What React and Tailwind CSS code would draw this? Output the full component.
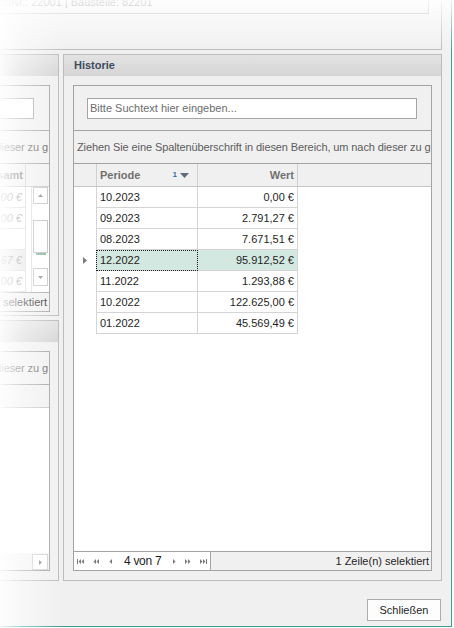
import React from 'react';

const rows = [
  { periode: '10.2023', wert: '0,00 €' },
  { periode: '09.2023', wert: '2.791,27 €' },
  { periode: '08.2023', wert: '7.671,51 €' },
  { periode: '12.2022', wert: '95.912,52 €', selected: true },
  { periode: '11.2022', wert: '1.293,88 €' },
  { periode: '10.2022', wert: '122.625,00 €' },
  { periode: '01.2022', wert: '45.569,49 €' },
];

const leftRows = [
  { wert: '0,00 €' },
  { wert: '0,00 €' },
  { wert: '' },
  { wert: '1.204,67 €', selected: true },
  { wert: '0,00 €' },
];

const GROUP_TEXT = 'Ziehen Sie eine Spaltenüberschrift in diesen Bereich, um nach dieser zu g';

// kleine Navigator-Pfeile
function NavIcon({ type }) {
  const c = '#7a7a7a';
  if (type === 'first')
    return (
      <svg width="7" height="5" viewBox="0 0 7 5">
        <rect x="0" y="0" width="1" height="5" fill={c} />
        <path d="M4 0L1.5 2.5L4 5Z M7 0L4.5 2.5L7 5Z" fill={c} />
      </svg>
    );
  if (type === 'prevPage')
    return (
      <svg width="6" height="5" viewBox="0 0 6 5">
        <path d="M3 0L0.5 2.5L3 5Z M6 0L3.5 2.5L6 5Z" fill={c} />
      </svg>
    );
  if (type === 'prev')
    return (
      <svg width="3" height="5" viewBox="0 0 3 5">
        <path d="M3 0L0.5 2.5L3 5Z" fill={c} />
      </svg>
    );
  if (type === 'next')
    return (
      <svg width="3" height="5" viewBox="0 0 3 5">
        <path d="M0 0L2.5 2.5L0 5Z" fill={c} />
      </svg>
    );
  if (type === 'nextPage')
    return (
      <svg width="6" height="5" viewBox="0 0 6 5">
        <path d="M0 0L2.5 2.5L0 5Z M3 0L5.5 2.5L3 5Z" fill={c} />
      </svg>
    );
  return (
    <svg width="7" height="5" viewBox="0 0 7 5">
      <path d="M0 0L2.5 2.5L0 5Z M3 0L5.5 2.5L3 5Z" fill={c} />
      <rect x="6" y="0" width="1" height="5" fill={c} />
    </svg>
  );
}

function PanelHeader({ title }) {
  return (
    <div className="flex h-[21px] shrink-0 items-center bg-linear-to-b from-[#e3e3e3] to-[#d5d5d5] pl-[10px] font-bold text-[#3d4b5c]">
      {title}
    </div>
  );
}

function LeftTop() {
  return (
    <div className="flex h-[262px] shrink-0 justify-end overflow-hidden">
      <div className="flex w-[300px] shrink-0 flex-col border border-[#bcbcbc]">
        <PanelHeader title="Positionen" />
        <div className="flex flex-1 flex-col pt-[9px] pr-[8px] pb-[7px] pl-[9px]">
          <div className="flex flex-1 flex-col border border-[#a3a3a3]">
            <div className="flex h-[45px] shrink-0 justify-end border-b border-[#a3a3a3] pt-[12px] pr-[15px]">
              <div className="h-[21px] w-[220px] border border-[#a5a5a5] bg-white" />
            </div>
            <div className="flex h-[33px] shrink-0 items-center justify-end overflow-hidden whitespace-nowrap border-b border-[#a3a3a3] pr-[1px] tracking-[-0.1px] text-[#5c5c5c]">
              <span>{GROUP_TEXT}</span>
            </div>
            <div className="flex h-[23px] shrink-0 border-b border-[#c5c5c5]">
              <div className="flex-1 border-r border-[#d0d0d0]" />
              <div className="flex w-[80px] items-center justify-end border-r border-[#d0d0d0] pr-[2px] font-bold text-[#707070]">
                Gesamt
              </div>
              <div className="w-[23px]" />
            </div>
            <div className="flex flex-1 overflow-hidden bg-white">
              <div className="flex flex-1 flex-col">
                {leftRows.map((r, i) => (
                  <div key={i} className={`flex h-[21px] shrink-0 ${r.selected ? 'bg-[#e6e6e6]' : ''}`}>
                    <div className="flex-1 border-r border-b border-[#d8d8d8]" />
                    <div className="flex w-[80px] items-center justify-end border-r border-b border-[#d8d8d8] pr-[3px] italic text-[#8a8a8a]">
                      {r.wert}
                    </div>
                  </div>
                ))}
              </div>
              <div className="flex w-[23px] pl-[5px]">
                <div className="flex w-[17px] flex-col border-l border-[#dadada] pl-[1px]">
                  <div className="flex h-[17px] w-[15px] items-center justify-center border border-[#c4c4c4] bg-white">
                    <svg width="5" height="3" viewBox="0 0 5 3"><path d="M0 3L2.5 0L5 3Z" fill="#8a8a8a" /></svg>
                  </div>
                  <div className="mt-[16px] h-[33px] w-[15px] border border-[#bdbdbd] bg-white" />
                  <div className="mx-auto h-[2px] w-[10px] bg-[#7fb594]" />
                  <div className="mt-[13px] flex h-[18px] w-[15px] items-center justify-center border border-[#c4c4c4] bg-white">
                    <svg width="5" height="3" viewBox="0 0 5 3"><path d="M0 0L2.5 3L5 0Z" fill="#8a8a8a" /></svg>
                  </div>
                </div>
              </div>
            </div>
            <div className="flex h-[19px] shrink-0 items-center justify-end border-t border-[#a3a3a3] pr-[2px]">
              1 Zeile(n) selektiert
            </div>
          </div>
        </div>
      </div>
    </div>
  );
}

function LeftBottom() {
  return (
    <div className="flex h-[261px] shrink-0 justify-end overflow-hidden">
      <div className="flex w-[300px] shrink-0 flex-col border border-[#bcbcbc]">
        <PanelHeader title="Details" />
        <div className="flex flex-1 flex-col pt-[9px] pr-[8px] pb-[9px] pl-[9px]">
          <div className="flex flex-1 flex-col border border-[#a3a3a3]">
            <div className="flex h-[33px] shrink-0 items-center justify-end overflow-hidden whitespace-nowrap border-b border-[#a3a3a3] pr-[1px] tracking-[-0.1px] text-[#5c5c5c]">
              <span>{GROUP_TEXT}</span>
            </div>
            <div className="h-[23px] shrink-0 border-b border-[#c5c5c5]" />
            <div className="flex-1 bg-white" />
            <div className="flex h-[17px] shrink-0 justify-end bg-[#f4f4f4] pr-[1px]">
              <div className="flex h-[16px] w-[16px] items-center justify-center self-end border border-[#d0d0d0] bg-white">
                <svg width="3" height="5" viewBox="0 0 3 5"><path d="M0 0L3 2.5L0 5Z" fill="#8a8a8a" /></svg>
              </div>
            </div>
          </div>
        </div>
      </div>
    </div>
  );
}

function Historie() {
  return (
    <div className="flex w-[379px] shrink-0 flex-col border border-[#bcbcbc]">
      <PanelHeader title="Historie" />
      <div className="flex flex-1 flex-col p-[9px]">
        <div className="flex flex-1 flex-col border border-[#a3a3a3]">
          {/* Suchfeld */}
          <div className="h-[45px] shrink-0 border-b border-[#a3a3a3] pt-[12px] pr-[14px] pl-[13px]">
            <div className="flex h-[21px] items-center border border-[#a5a5a5] bg-white pl-[2px] text-[#6d6d6d]">
              Bitte Suchtext hier eingeben...
            </div>
          </div>
          {/* Gruppierbereich */}
          <div className="flex h-[33px] shrink-0 items-center overflow-hidden whitespace-nowrap border-b border-[#a3a3a3] pl-[3px] tracking-[-0.1px] text-[#5c5c5c]">
            {GROUP_TEXT}
          </div>
          {/* Spaltenköpfe */}
          <div className="flex h-[23px] shrink-0 border-b border-[#c5c5c5]">
            <div className="w-[23px] border-r border-[#d0d0d0]" />
            <div className="flex w-[101px] items-center border-r border-[#d0d0d0] pr-[8px] pl-[3px] font-bold text-[#707070]">
              <span className="flex-1">Periode</span>
              <span className="mr-[3px] text-[8px] font-bold text-[#2f6fb3]">1</span>
              <svg width="9" height="5" viewBox="0 0 9 5"><path d="M0 0L9 0L4.5 5Z" fill="#5f6b78" /></svg>
            </div>
            <div className="flex w-[100px] items-center justify-end border-r border-[#d0d0d0] pr-[3px] font-bold text-[#707070]">
              Wert
            </div>
          </div>
          {/* Zeilen */}
          <div className="flex flex-1 flex-col bg-white">
            {rows.map((r) => (
              <div key={r.periode} className="flex h-[21px] shrink-0">
                <div className="flex w-[22px] items-center justify-center">
                  {r.selected && (
                    <svg width="4" height="7" viewBox="0 0 4 7"><path d="M0 0L4 3.5L0 7Z" fill="#7a7a7a" /></svg>
                  )}
                </div>
                <div
                  className={`flex w-[102px] border-r border-b border-l border-[#d4d4d4] ${
                    r.selected ? 'bg-[#d3e8e1]' : ''
                  }`}
                >
                  <div
                    className={`flex flex-1 items-center pl-[3px] ${
                      r.selected ? '-mr-px -mb-px -ml-px border border-dotted border-[#222] pl-[3px]' : ''
                    }`}
                  >
                    {r.periode}
                  </div>
                </div>
                <div
                  className={`flex w-[100px] items-center justify-end border-r border-b border-[#d4d4d4] pr-[3px] ${
                    r.selected ? 'bg-[#d3e8e1]' : ''
                  }`}
                >
                  {r.wert}
                </div>
              </div>
            ))}
          </div>
          {/* Navigator */}
          <div className="flex h-[19px] shrink-0 border-t border-[#a3a3a3]">
            <div className="flex w-[137px] items-center border-r border-[#a3a3a3] bg-white pl-[3px]">
              <NavIcon type="first" />
              <span className="ml-[9px] flex"><NavIcon type="prevPage" /></span>
              <span className="ml-[10px] flex"><NavIcon type="prev" /></span>
              <span className="ml-[12px] text-[12px] tracking-[-0.3px]">4 von 7</span>
              <span className="ml-[12px] flex"><NavIcon type="next" /></span>
              <span className="ml-[9px] flex"><NavIcon type="nextPage" /></span>
              <span className="ml-[9px] flex"><NavIcon type="last" /></span>
            </div>
            <div className="flex flex-1 items-center justify-end pr-[2px]">1 Zeile(n) selektiert</div>
          </div>
        </div>
      </div>
    </div>
  );
}

export default function App() {
  return (
    <div className="relative h-[628px] w-[454px] overflow-hidden bg-[#fbfbfb] font-['Liberation_Sans',Arial,sans-serif] text-[11px] leading-none text-[#1e1e1e]">
      <div className="flex h-[627px] w-[452px] flex-col border-r border-b border-[#3a9e94] bg-[#f0f0f0]">
        {/* Kopfbereich */}
        <div className="h-[50px] w-[442px] shrink-0 border-r border-b border-[#b9b9b9]">
          <div className="-mt-[8px] flex h-[22px] w-[429px] items-center overflow-hidden whitespace-nowrap border-r border-b border-[#a9a9a9] text-[11px]">
            <span className="-ml-[11px]">FirmNr.: 22001 | Baustelle: 82201</span>
          </div>
        </div>

        <div className="mt-[4px] flex h-[527px] shrink-0 gap-[4px]">
          <div className="flex w-[59px] shrink-0 flex-col gap-[4px]">
            <LeftTop />
            <LeftBottom />
          </div>
          <Historie />
        </div>

        <div className="mt-[18px] flex justify-end pr-[10px]">
          <button className="h-[22px] w-[74px] border border-[#adadad] bg-[#fdfdfd] text-[11px] text-[#1e1e1e]">
            Schließen
          </button>
        </div>
      </div>

      {/* Ausblendung links und oben */}
      <div className="pointer-events-none absolute inset-y-0 left-0 w-[62px] bg-linear-to-r from-white/90 via-white/50 via-35% to-white/0" />
      <div className="pointer-events-none absolute inset-x-0 top-0 h-[53px] bg-linear-to-b from-white/90 to-white/0" />
    </div>
  );
}
